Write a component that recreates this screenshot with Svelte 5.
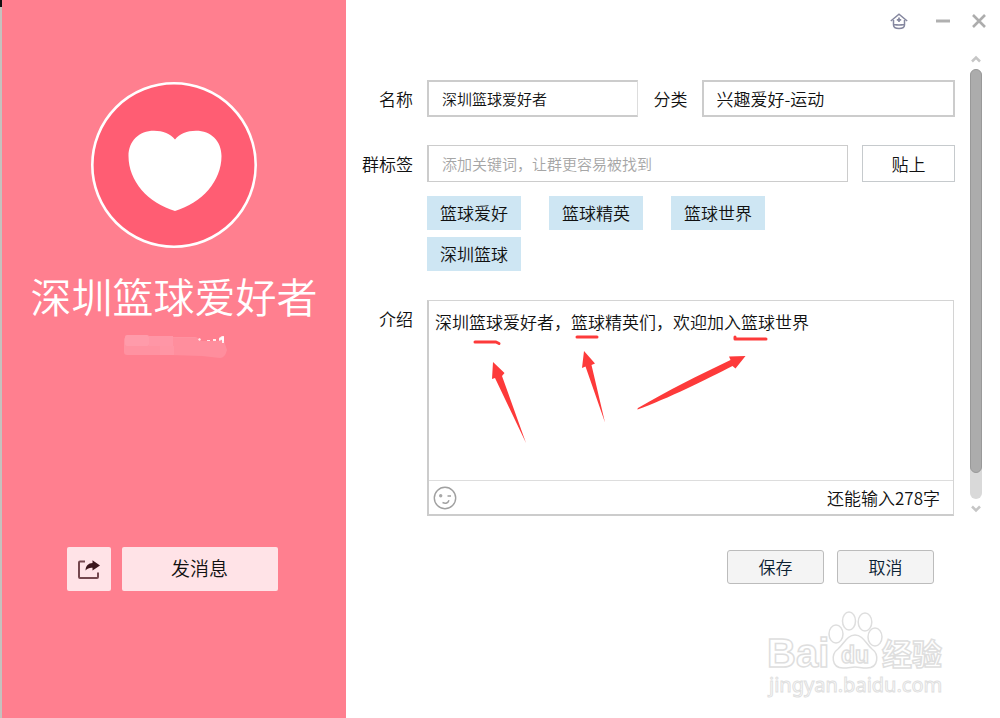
<script>
  let name = $state('深圳篮球爱好者');
  let category = $state('兴趣爱好-运动');
  let keyword = $state('');
  let intro = $state('深圳篮球爱好者，篮球精英们，欢迎加入篮球世界');
  const limit = 300;
  const tags = ['篮球爱好', '篮球精英', '篮球世界', '深圳篮球'];
  let remaining = $derived(limit - intro.length);
</script>

<div class="window">
  <aside class="profile">
    <svg class="avatar" viewBox="0 0 166 166" aria-hidden="true">
      <circle cx="83" cy="83" r="81.7" fill="#ff5d73" stroke="#fff" stroke-width="2.6" />
      <path d="M84 57.500C79.500 52 72 48.700 63 48.700C48 48.700 37.500 59 37.500 74C37.500 99 57 121 84 129C111 121 130.500 99 130.500 74C130.500 59 120 48.700 105 48.700C96 48.700 88.500 52 84 57.500Z" fill="#fff" />
    </svg>
    <h1>{name}</h1>
    <svg class="masked" viewBox="0 0 106 26" aria-hidden="true">
      <path d="M78 4l2 1-1 2-2-1zM86 6h3v2h-3zM92 5h3v3h-3zM98 4l3-2h2v8h-2v-5l-3 1z" fill="#fff" opacity=".85" />
      <rect x="3" y="3" width="74" height="18" rx="3" fill="#ff92a1" />
      <path d="M50 4h27v3h26l3 9q-2 8-7 8l-18-2-31-1z" fill="#ff8e9d" />
      <path d="M98 5l3-2h2v6h-2v-3l-3 1z" fill="#fff" opacity=".85" />
      <rect x="4" y="1" width="24" height="11" rx="2" fill="#ff9baa" />
      <rect x="28" y="2" width="24" height="10" fill="#ff96a6" />
      <rect x="39" y="12" width="14" height="9" fill="#ff95a4" />
    </svg>
    <div class="profile-actions">
      <button class="share" aria-label="分享">
        <svg width="24" height="22" viewBox="0 0 24 22" aria-hidden="true">
          <path d="M8 3.500H3Q2 3.500 2 4.500V19Q2 20 3 20H20Q21 20 21 19V14.500" fill="none" stroke="#74474e" stroke-width="2" />
          <path d="M15.500 2.200L23 7.500L15.500 12.500V9.800C12.500 9.600 10.500 10.300 8.500 12.500C8.700 7.500 11.500 5.200 15.500 5Z" fill="#3c161c" />
        </svg>
      </button>
      <button class="message">发消息</button>
    </div>
  </aside>

  <main>
    <header>
      <button class="tool home" aria-label="群空间">
        <svg width="18" height="17" viewBox="0 0 18 17" fill="none" stroke="#85879f" aria-hidden="true">
          <path d="M.8 8L9 1.200L17.200 8" stroke-width="1.500" />
          <path d="M3.500 7V12Q3.500 15.500 9 15.500T14.500 12V7M4 11.500Q9 12.500 14 11.500" stroke-width="1.500" />
          <path d="M9 4.500V9M6.800 6.800H11.200" stroke-width="1.700" />
        </svg>
      </button>
      <button class="tool" aria-label="最小化">
        <svg width="14" height="14" viewBox="0 0 14 14" aria-hidden="true"><path d="M0 7H14" stroke="#b0b0b0" stroke-width="3" /></svg>
      </button>
      <button class="tool" aria-label="关闭">
        <svg width="14" height="14" viewBox="0 0 14 14" aria-hidden="true"><path d="M1 1L13 13M13 1L1 13" stroke="#adadad" stroke-width="2.600" /></svg>
      </button>
    </header>

    <div class="scroll-area">
      <form id="group" onsubmit={(e) => e.preventDefault()}>
        <label for="name">名称</label>
        <div class="pair">
          <input id="name" class="name" bind:value={name} />
          <label for="category">分类</label>
          <input id="category" class="category" bind:value={category} />
        </div>

        <label for="keyword">群标签</label>
        <input id="keyword" class="keyword" placeholder="添加关键词，让群更容易被找到" bind:value={keyword} />
        <button type="button" class="paste">贴上</button>

        <ul class="tags">
          {#each tags as tag}<li>{tag}</li>{/each}
        </ul>

        <label for="intro" class="intro-label">介绍</label>
        <div class="editor">
          <textarea id="intro" spellcheck="false" bind:value={intro}></textarea>
          <div class="editor-bar">
            <button type="button" class="tool" aria-label="表情">
              <svg width="24" height="24" viewBox="0 0 24 24" fill="none" stroke="#a0a0a0" aria-hidden="true">
                <circle cx="12" cy="12" r="10.700" stroke-width="1.400" />
                <circle cx="7.700" cy="9.800" r="1.700" fill="#a8a8a8" stroke="none" />
                <path d="M14.500 10H18M9.500 16.500Q14.500 18.500 16 14.200" stroke-width="1.500" />
              </svg>
            </button>
            <span>还能输入{remaining}字</span>
          </div>
          <svg class="marks" width="345" height="150" viewBox="0 0 345 150" aria-hidden="true">
            <g fill="none" stroke="#fd3a3a" stroke-width="3" stroke-linecap="round" stroke-linejoin="round">
              <path d="M48 41H69L72 42.500" />
              <path d="M150 36H170" />
              <path d="M308 36V38H339" />
            </g>
            <g fill="#fd3a3a">
              <path d="M66 61L77.500 72L75 75L99 142L68 77L65 78Z" />
              <path d="M157 50L168 62.500L164.500 64L178 121.500L158.500 65.500L155 67Z" />
              <path d="M318.500 55L308.500 67.500L305.500 65C280 78 240 98 210.500 108.500Q210 108 211 107C240 90 272 74 303.500 59L302 55.500Z" />
            </g>
          </svg>
        </div>
      </form>

      <div class="scrollbar" aria-hidden="true">
        <svg width="12" height="8" viewBox="0 0 12 8"><path d="M2 6.500L6 2.500L10 6.500" fill="none" stroke="#c6c6c6" stroke-width="2.500" /></svg>
        <div class="track"><div class="thumb"></div></div>
        <svg width="12" height="8" viewBox="0 0 12 8"><path d="M2 1.500L6 5.500L10 1.500" fill="none" stroke="#c6c6c6" stroke-width="2.500" /></svg>
      </div>
    </div>

    <div class="actions">
      <button form="group">保存</button>
      <button type="button">取消</button>
    </div>

    <footer>
      <svg width="184" height="90" viewBox="0 0 184 90" aria-label="Baidu 经验">
        <g fill="#fff" stroke="#dedede" stroke-width="1.500">
          <ellipse cx="71" cy="23" rx="7" ry="9" />
          <ellipse cx="84" cy="10" rx="6.500" ry="9" />
          <ellipse cx="100" cy="11" rx="6.800" ry="9" />
          <ellipse cx="110" cy="26" rx="7" ry="9" />
          <path d="M90 24C98 24 101 33 107 38C114 43 114 57 102 57C96 57 94 56 90 56C86 56 84 57 78 57C66 57 66 43 73 38C79 33 82 24 90 24Z" />
        </g>
        <g class="mark-text">
          <text x="2" y="56" font-size="40">Bai</text>
          <text x="76" y="52" font-size="23">du</text>
          <text class="cjk" x="117" y="54" font-size="30">经验</text>
          <text class="site" x="4" y="81" font-size="20">jingyan.baidu.com</text>
        </g>
      </svg>
    </footer>
  </main>
</div>

<style>
  :global(body) { margin: 0; background: #fff; }
  .window, button, input, textarea {
    font-family: "Noto Sans CJK SC", sans-serif;
    font-weight: 350;
    color: #111;
  }
  .window, .window * { box-sizing: border-box; }
  .window {
    display: grid;
    grid-template-columns: 346px minmax(0, 1fr);
    min-height: 100vh;
    font-size: 17px;
    line-height: 24px;
    background: #fff;
  }
  button { margin: 0; padding: 0; font-size: 17px; line-height: 24px; cursor: pointer; }
  svg { display: block; }

  .profile {
    display: flex;
    flex-direction: column;
    align-items: center;
    padding: 82px 0 0 2px;
    background: linear-gradient(#111 7px, #c5c1be 7px) left / 2px 100% no-repeat #ff7f8f;
  }
  .avatar { width: 166px; height: 166px; }
  h1 { margin: 17px 0 0; font-size: 41px; line-height: 60px; font-weight: 350; color: #fff; white-space: nowrap; }
  .masked { width: 106px; height: 26px; margin-top: 9px; }
  .profile-actions { display: flex; gap: 11px; margin-top: 187px; padding-right: 4px; }
  .profile-actions button { height: 44px; border: 0; border-radius: 2px; background: #ffe3e7; }
  .share { display: grid; place-items: center; width: 44px; }
  .profile-actions .message { width: 156px; padding-bottom: 2px; font-size: 19px; }

  main { display: flex; flex-direction: column; min-width: 0; }
  header { display: flex; justify-content: flex-end; align-items: center; gap: 22px; height: 52px; padding: 0 14px 10px 0; }
  .tool { display: grid; place-items: center; border: 0; background: none; }
  .home { margin-right: 6px; }

  .scroll-area { display: grid; grid-template-columns: minmax(0, 1fr) 12px; gap: 15px; padding-right: 18px; }
  form {
    display: grid;
    grid-template-columns: 67px minmax(0, 1fr) 93px;
    column-gap: 14px;
    align-items: center;
    padding-top: 28px;
  }
  form > label { text-align: right; }
  input { width: 100%; min-width: 0; height: 37px; padding: 0 13px; border: 2px solid #ccc; border-radius: 0; background: #fff; font-size: 15px; outline: 0; }
  .pair { grid-column: 2 / 4; display: grid; grid-template-columns: 211fr auto 254fr; align-items: center; }
  .pair label { padding: 0 14px 0 16px; }
  .name { border-right: 1px solid #ddd; }
  .category { font-size: 17px; }
  .keyword, .paste, form > label[for="keyword"] { margin-top: 28px; }
  .keyword { border-width: 1px 1px 1px 2px; }
  .keyword::placeholder { color: #a6a6a6; opacity: 1; }
  .paste { height: 37px; border: 1px solid #c6cacd; background: #fff; }
  .tags { grid-column: 2; display: flex; flex-wrap: wrap; gap: 7px 28px; margin: 14px 0 0; padding: 0; list-style: none; }
  .tags li { width: 94px; height: 34px; line-height: 34px; text-align: center; background: #cee6f3; }
  .intro-label { grid-column: 1; align-self: start; margin-top: 36px; }
  .editor { position: relative; grid-column: 2 / 4; margin-top: 29px; margin-right: 1px; border: 1px solid #d4d4d4; border-left: 2px solid #ccc; border-bottom: 2px solid #ccc; }
  textarea { display: block; width: 100%; height: 179px; padding: 9px 6px; border: 0; resize: none; outline: 0; background: none; font-size: 17px; line-height: 24px; }
  .editor-bar { display: flex; align-items: center; justify-content: space-between; height: 34px; padding: 0 13px 0 4px; border-top: 1px solid #ddd; }
  .marks { position: absolute; left: -2px; top: 0; pointer-events: none; }

  .scrollbar { display: flex; flex-direction: column; align-items: center; gap: 6px; padding: 3px 0 3px; }
  .track { flex: 1; width: 12px; border-radius: 6px; background: #d9d9d9; }
  .thumb { height: 94%; border: 1px solid #999; border-radius: 6px; background: #acacac; }

  .actions { display: flex; justify-content: flex-end; gap: 13px; margin-top: 34px; padding-right: 66px; }
  .actions button { width: 97px; height: 34px; border: 1px solid #bcbcbc; border-radius: 3px; background: #f4f4f4; color: #0b2233; }
  footer { display: flex; justify-content: flex-end; padding: 27px 51px 0 0; }
  .mark-text { font-family: "Liberation Sans", Arial, sans-serif; font-weight: 700; fill: #fff; stroke: #dedede; stroke-width: 1.5px; }
  .cjk { font-family: "Noto Sans CJK SC", sans-serif; }
  .site { font-family: "Noto Sans", sans-serif; font-weight: 400; stroke: #e0e0e0; stroke-width: 1px; }
</style>
